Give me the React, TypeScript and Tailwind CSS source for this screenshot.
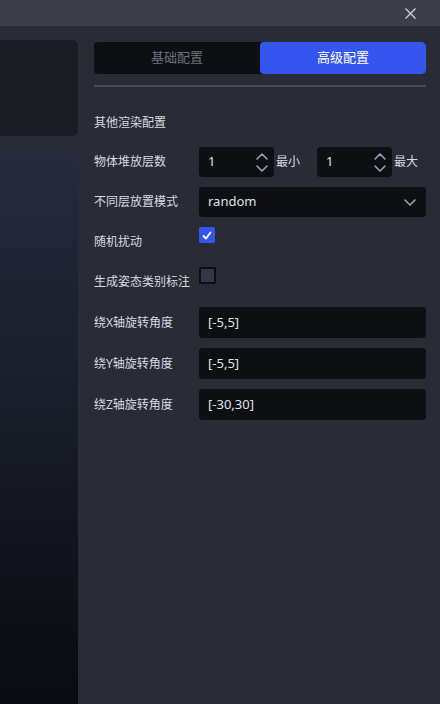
import { useState } from "react";

const font = { fontFamily: '"Noto Sans", "Noto Sans CJK SC", sans-serif' };

function Chevron({ up = false }: { up?: boolean }) {
  return (
    <svg width="12" height="7" viewBox="0 0 12 7" fill="none">
      <path
        d={up ? "M1 6 L6 1 L11 6" : "M1 1 L6 6 L11 1"}
        stroke="#9ba1b3"
        strokeWidth="1.6"
        strokeLinecap="round"
        strokeLinejoin="round"
      />
    </svg>
  );
}

function NumberBox({ value }: { value: string }) {
  return (
    <div className="flex h-[30px] w-[75px] items-center justify-between rounded-[4px] bg-[#0e0f13] pr-[6px] pl-[9px]">
      <span className="text-[13px] text-[#dfe3ea]">{value}</span>
      <div className="flex flex-col items-center gap-[5px]">
        <Chevron up />
        <Chevron />
      </div>
    </div>
  );
}

function TextBox({ value }: { value: string }) {
  return (
    <div className="flex h-[31px] flex-1 items-center rounded-[4px] bg-[#0e0f13] px-[9px] text-[13px] text-[#dfe3ea]">
      {value}
    </div>
  );
}

function Row({ label, children, top = false, h = "h-[30px]" }: { label: string; children: React.ReactNode; top?: boolean; h?: string }) {
  return (
    <div className={`flex ${h}`}>
      <div className="flex w-[105px] shrink-0 items-center text-[12px] leading-[16px] text-[#d6dae2]">
        <span>{label}</span>
      </div>
      <div className={`flex flex-1 ${top ? "items-start" : "items-center"}`}>{children}</div>
    </div>
  );
}

function Check({ on, onClick, size }: { on: boolean; onClick: () => void; size: string }) {
  return (
    <button
      onClick={onClick}
      className={`flex ${size} items-center justify-center rounded-[2px] ${on ? "bg-[#3456ee]" : "border-2 border-[#0e0f13] bg-[#343747]"}`}
    >
      {on && (
        <svg width="10" height="9" viewBox="0 0 10 9">
          <path d="M1.5 5 L4 7.5 L8.5 1.5" stroke="white" strokeWidth="1.8" fill="none" strokeLinecap="round" strokeLinejoin="round" />
        </svg>
      )}
    </button>
  );
}

export default function App() {
  const [tab, setTab] = useState(1);
  const [jitter, setJitter] = useState(true);
  const [pose, setPose] = useState(false);

  return (
    <div className="flex h-[704px] w-[440px] flex-col overflow-hidden bg-[#2a2c35]" style={font}>
      <div className="flex h-[26px] shrink-0 items-center justify-end bg-[#3c3f4a] pr-[24px]">
        <svg width="11" height="11" viewBox="0 0 11 11">
          <path d="M0.5 0.5 L10.5 10.5 M10.5 0.5 L0.5 10.5" stroke="#d2d5dc" strokeWidth="1.3" />
        </svg>
      </div>

      <div className="flex flex-1">
        <div className="flex w-[78px] shrink-0 flex-col pt-[14px]">
          <div className="h-[96px] rounded-r-[5px] bg-[#1b1d22]" />
          <div className="mt-[15px] flex-1 bg-gradient-to-b from-[#262b3e] via-[#181c27] to-[#080b10]" />
        </div>

        <div className="ml-[16px] flex w-[332px] flex-col pt-[16px]">
          <div className="flex h-[32px] overflow-hidden rounded-[4px] bg-[#0e0f13]">
            {["基础配置", "高级配置"].map((t, i) => (
              <button
                key={t}
                onClick={() => setTab(i)}
                className={`flex-1 rounded-[4px] text-[13px] ${tab === i ? "bg-[#3456ee] text-white" : "text-[#6c717d]"}`}
              >
                {t}
              </button>
            ))}
          </div>
          <div className="mt-[11px] h-[2px] bg-[#474a57]" />

          <div className="mt-[28px] text-[12px] leading-[16px] text-[#d6dae2]">其他渲染配置</div>

          <div className="mt-[16px] flex flex-col gap-[10px]">
            <Row label="物体堆放层数">
              <NumberBox value="1" />
              <span className="ml-[2px] text-[12px] text-[#d6dae2]">最小</span>
              <div className="ml-[17px]">
                <NumberBox value="1" />
              </div>
              <span className="ml-[2px] text-[12px] text-[#d6dae2]">最大</span>
            </Row>
            <Row label="不同层放置模式">
              <div className="flex h-[30px] flex-1 items-center justify-between rounded-[4px] bg-[#0e0f13] pr-[10px] pl-[9px]">
                <span className="text-[13px] text-[#dfe3ea]">random</span>
                <Chevron />
              </div>
            </Row>
            <Row label="随机扰动" top>
              <Check on={jitter} onClick={() => setJitter(!jitter)} size="h-[16px] w-[16px]" />
            </Row>
            <Row label="生成姿态类别标注" top>
              <Check on={pose} onClick={() => setPose(!pose)} size="h-[17px] w-[17px]" />
            </Row>
            <Row label="绕X轴旋转角度" h="h-[31px]">
              <TextBox value="[-5,5]" />
            </Row>
            <Row label="绕Y轴旋转角度" h="h-[31px]">
              <TextBox value="[-5,5]" />
            </Row>
            <Row label="绕Z轴旋转角度" h="h-[31px]">
              <TextBox value="[-30,30]" />
            </Row>
          </div>
        </div>
      </div>
    </div>
  );
}
